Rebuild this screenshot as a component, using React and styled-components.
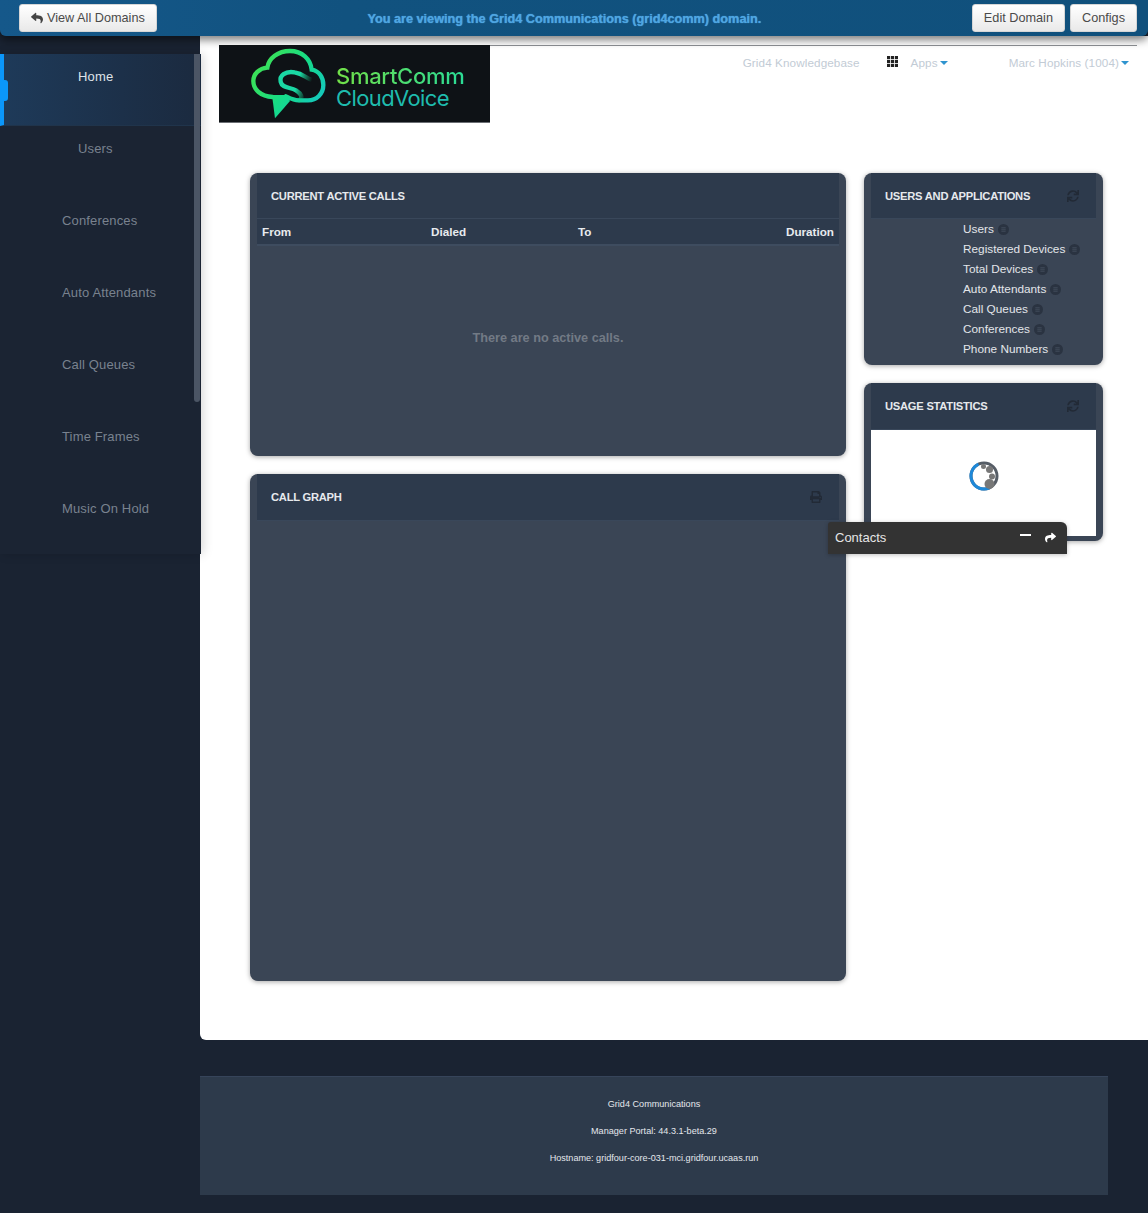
import React from "react";
import styled, { createGlobalStyle } from "styled-components";
import { FaReply, FaShare, FaSync, FaPrint, FaBars } from "react-icons/fa";

const GlobalStyle = createGlobalStyle`
	html, body {
		margin: 0;
		padding: 0;
		background: #1a2332;
		font-family: "Liberation Sans", Arial, sans-serif;
	}
	* {
		box-sizing: border-box;
	}
`;

const TopBar = styled.div`
	height: 36px;
	display: flex;
	align-items: center;
	justify-content: space-between;
	padding: 4px 11px 0 19px;
	background: linear-gradient(90deg, #15588a 0%, #11527f 30%, #10507c 100%);
	border-radius: 0 0 6px 6px;
	box-shadow: 0 4px 8px rgba(0, 0, 0, 0.5);
	position: relative;
	z-index: 3;
`;

const BarButton = styled.button`
	height: 28px;
	margin-bottom: 4px;
	padding: 0 11px;
	display: inline-flex;
	align-items: center;
	gap: 4px;
	font-family: inherit;
	font-size: 12.7px;
	color: #4a4a4a;
	background: linear-gradient(180deg, #ffffff 0%, #e9e9e9 100%);
	border: 1px solid #d6d6d6;
	border-radius: 3px;
`;

const BarActions = styled.div`
	display: flex;
	gap: 5px;
`;

const DomainNotice = styled.div`
	font-size: 12.7px;
	font-weight: bold;
	color: #4ea6e2;
	text-shadow: 0 0 1px #4ea6e2;
	margin-bottom: 2px;
`;

const Layout = styled.div`
	display: flex;
	align-items: flex-start;
`;

const Sidebar = styled.div`
	width: 200px;
	flex-shrink: 0;
	padding-top: 18px;
`;

const SideNav = styled.div`
	position: relative;
	width: 201px;
	height: 500px;
	background: #1b2433;
	box-shadow: 2px 0 10px rgba(0, 0, 0, 0.16);
	z-index: 2;
`;

const SideScroll = styled.div`
	position: absolute;
	right: 1px;
	top: 0;
	width: 6px;
	height: 348px;
	background: #4b5565;
	border-radius: 0 0 3px 3px;
`;

const SideItem = styled.div`
	position: relative;
	height: 72px;
	padding: 15px 0 0 ${(p) => p.$indent}px;
	font-size: 13px;
	line-height: 16px;
	letter-spacing: 0.15px;
	color: ${(p) => (p.$active ? "#dfe3e8" : "#79828f")};
	background: ${(p) =>
		p.$active ? "linear-gradient(90deg, #1e3a59 0%, #1c3049 60%, #1b2a3f 100%)" : "transparent"};
	border-left: ${(p) => (p.$active ? "4px solid #0b97fb" : "none")};
	${(p) => p.$active && `padding-left: ${p.$indent - 4}px; border-bottom: 1px solid #20344b;`}
`;

const ActiveNotch = styled.span`
	position: absolute;
	left: -4px;
	top: 26px;
	width: 8px;
	height: 21px;
	background: #0b97fb;
	border-radius: 0 3px 3px 0;
`;

const Main = styled.div`
	flex: 1;
	min-width: 0;
`;

const Sheet = styled.div`
	height: 1004px;
	background: #ffffff;
	border-radius: 0 0 0 6px;
	padding: 9px 11px 0 19px;
`;

const SheetHead = styled.div`
	display: flex;
	height: 78px;
`;

const LogoBox = styled.div`
	width: 271px;
	height: 78px;
	flex-shrink: 0;
	display: flex;
	align-items: flex-start;
	padding-left: 21px;
	background: #0e1216;
	border-bottom: 1px solid #6b6f74;
`;

const LogoText = styled.div`
	margin: 20px 0 0 -4px;
	font-family: Inter, "Liberation Sans", sans-serif;
`;

const LogoTop = styled.div`
	font-size: 22px;
	line-height: 22px;
	font-weight: 500;
	letter-spacing: -0.3px;
	background: linear-gradient(90deg, #72e048 0%, #2bdc96 100%);
	-webkit-background-clip: text;
	background-clip: text;
	color: transparent;
`;

const LogoBottom = styled.div`
	font-size: 22px;
	line-height: 22px;
	letter-spacing: -0.6px;
	color: #1fbcae;
`;

const TopNav = styled.div`
	flex: 1;
	height: 18px;
	border-top: 1px solid #8d9094;
	display: flex;
	justify-content: flex-end;
	align-items: flex-start;
	padding: 10px 8px 0 0;
	font-size: 11.7px;
	line-height: 14px;
	letter-spacing: 0.1px;
	color: #c2cbd5;
`;

const NavLink = styled.span`
	display: inline-flex;
	align-items: center;
	margin-left: ${(p) => p.$gap || 0}px;
	white-space: nowrap;
`;

const Caret = styled.i`
	width: 0;
	height: 0;
	margin-left: 2px;
	border-left: 4px solid transparent;
	border-right: 4px solid transparent;
	border-top: 4px solid #2f94cf;
`;

const Dashboard = styled.div`
	display: grid;
	grid-template-columns: 596px 239px;
	column-gap: 18px;
	margin: 50px 0 0 31px;
`;

const Column = styled.div`
	display: flex;
	flex-direction: column;
	gap: 18px;
`;

const Panel = styled.div`
	height: ${(p) => p.$height}px;
	padding: 0 7px;
	background: #3a4555;
	border-radius: 8px;
	box-shadow: 0 1px 5px rgba(0, 0, 0, 0.35);
`;

const PanelHead = styled.div`
	height: ${(p) => p.$height || 46}px;
	display: flex;
	align-items: center;
	justify-content: space-between;
	padding: 0 17px 0 14px;
	background: #2d3a4c;
	border-bottom: 1px solid #39475a;
	font-size: 11.2px;
	letter-spacing: -0.25px;
	font-weight: bold;
	color: #e6e9ed;
`;

const HeadIcon = styled.span`
	display: flex;
	color: #222a36;
	font-size: 12px;
`;

const CallsTable = styled.div`
	display: grid;
	grid-template-columns: 169px 147px 1fr auto;
	height: 27px;
	align-items: center;
	padding: 0 5px;
	background: #2d3a4c;
	border-bottom: 2px solid #3e4c5f;
	font-size: 11.7px;
	font-weight: bold;
	color: #e8ebee;
`;

const EmptyCalls = styled.div`
	padding-top: 85px;
	text-align: center;
	font-size: 12.7px;
	font-weight: bold;
	color: #727a85;
`;

const UsageList = styled.div`
	padding-left: 92px;
`;

const UsageRow = styled.div`
	height: 20px;
	display: flex;
	align-items: center;
	gap: 4px;
	font-size: 11.8px;
	color: #e3e6ea;
`;

const CountBadge = styled.span`
	width: 11px;
	height: 11px;
	border-radius: 50%;
	display: inline-flex;
	align-items: center;
	justify-content: center;
	background: #2a3341;
	color: #4b5767;
	font-size: 5px;
`;

const LoadingBody = styled.div`
	height: 106px;
	display: flex;
	justify-content: center;
	padding-top: 31px;
	background: #ffffff;
`;

const Footer = styled.div`
	margin-top: 36px;
	width: 908px;
	height: 119px;
	padding-top: 21px;
	background: #2d3a4b;
	border-top: 1px solid #36445a;
	text-align: center;
	color: #e4e7eb;
	font-size: 9.1px;
`;

const FooterLine = styled.div`
	height: 27px;
	line-height: 12px;
`;

const BottomGap = styled.div`
	height: 18px;
`;

const ContactsDock = styled.div`
	position: absolute;
	left: 828px;
	top: 522px;
	width: 239px;
	height: 32px;
	display: flex;
	align-items: center;
	justify-content: space-between;
	padding: 0 11px 2px 7px;
	background: #333333;
	border-radius: 3px 6px 0 0;
	box-shadow: 0 1px 4px rgba(0, 0, 0, 0.25);
	color: #e6e6e6;
	font-size: 13px;
	z-index: 4;
`;

const DockActions = styled.div`
	display: flex;
	align-items: center;
	gap: 14px;
	color: #ffffff;
`;

const DockMinimize = styled.span`
	width: 11px;
	height: 2px;
	margin-top: -5px;
	background: #ffffff;
`;

const CloudLogo = () => (
	<svg width="100" height="77" viewBox="0 0 300 231" fill="none">
		<defs>
			<linearGradient id="cloudGrad" gradientUnits="userSpaceOnUse" x1="40" y1="30" x2="250" y2="170">
				<stop offset="0" stopColor="#46e24a" />
				<stop offset="0.55" stopColor="#16dc86" />
				<stop offset="1" stopColor="#14c6c2" />
			</linearGradient>
			<linearGradient id="swirlGrad" gradientUnits="userSpaceOnUse" x1="218" y1="100" x2="180" y2="88">
				<stop offset="0" stopColor="#16c886" stopOpacity="0" />
				<stop offset="1" stopColor="#1ad8a4" />
			</linearGradient>
		</defs>
		<g strokeWidth="13" strokeLinecap="round">
			<path
				stroke="url(#cloudGrad)"
				d="M98 156 C62 154 40 134 40 108 C40 86 58 70 82 68 C86 40 114 18 150 18 C186 18 212 42 215 74 C238 78 250 98 250 120 C250 146 230 166 204 166 L176 166 C160 166 150 160 138 154"
			/>
			<path
				stroke="url(#swirlGrad)"
				d="M214 104 C198 100 190 86 164 82 C136 77 118 92 122 110 C126 130 150 126 168 136 C184 146 190 158 178 166"
			/>
		</g>
		<path d="M96 150 L105 220 L150 168 L140 150 Z" fill="url(#cloudGrad)" />
	</svg>
);

const LoadingSpinner = () => (
	<svg width="30" height="30" viewBox="0 0 30 30">
		<circle cx="15" cy="15" r="13" fill="none" stroke="#565d66" strokeWidth="3" />
		<path d="M15 2 A13 13 0 0 0 15 28" fill="none" stroke="#1e88d8" strokeWidth="3" transform="rotate(-25 15 15)" />
		<circle cx="14.5" cy="5.5" r="2.5" fill="#777" />
		<circle cx="20.5" cy="8.5" r="3.5" fill="#777" />
		<circle cx="23" cy="15.5" r="3" fill="#777" />
		<circle cx="20.5" cy="23" r="5" fill="#777" />
	</svg>
);

const GridGlyph = () => (
	<svg width="11" height="11" viewBox="0 0 11 11" fill="#222222">
		{[0, 4, 8].map((y) =>
			[0, 4, 8].map((x) => <rect key={`${x}-${y}`} x={x} y={y} width="3.2" height="3.2" />)
		)}
	</svg>
);

const sideItems = [
	{ label: "Home", indent: 78, active: true },
	{ label: "Users", indent: 78 },
	{ label: "Conferences", indent: 62 },
	{ label: "Auto Attendants", indent: 62 },
	{ label: "Call Queues", indent: 62 },
	{ label: "Time Frames", indent: 62 },
	{ label: "Music On Hold", indent: 62 },
];

const usageItems = [
	"Users",
	"Registered Devices",
	"Total Devices",
	"Auto Attendants",
	"Call Queues",
	"Conferences",
	"Phone Numbers",
];

const App = () => {
	return (
		<>
			<GlobalStyle />
			<TopBar>
				<BarButton>
					<FaReply size={12} color="#444" /> View All Domains
				</BarButton>
				<DomainNotice>You are viewing the Grid4 Communications (grid4comm) domain.</DomainNotice>
				<BarActions>
					<BarButton>Edit Domain</BarButton>
					<BarButton>Configs</BarButton>
				</BarActions>
			</TopBar>
			<Layout>
				<Sidebar>
					<SideNav>
						{sideItems.map((item) => (
							<SideItem key={item.label} $indent={item.indent} $active={item.active}>
								{item.active && <ActiveNotch />}
								{item.label}
							</SideItem>
						))}
						<SideScroll />
					</SideNav>
				</Sidebar>
				<Main>
					<Sheet>
						<SheetHead>
							<LogoBox>
								<CloudLogo />
								<LogoText>
									<LogoTop>SmartComm</LogoTop>
									<LogoBottom>CloudVoice</LogoBottom>
								</LogoText>
							</LogoBox>
							<TopNav>
								<NavLink>Grid4 Knowledgebase</NavLink>
								<NavLink $gap={27}>
									<GridGlyph />
								</NavLink>
								<NavLink $gap={13}>
									Apps
									<Caret />
								</NavLink>
								<NavLink $gap={61}>
									Marc Hopkins (1004)
									<Caret />
								</NavLink>
							</TopNav>
						</SheetHead>
						<Dashboard>
							<Column>
								<Panel $height={283}>
									<PanelHead>CURRENT ACTIVE CALLS</PanelHead>
									<CallsTable>
										<span>From</span>
										<span>Dialed</span>
										<span>To</span>
										<span>Duration</span>
									</CallsTable>
									<EmptyCalls>There are no active calls.</EmptyCalls>
								</Panel>
								<Panel $height={507}>
									<PanelHead $height={47}>
										CALL GRAPH
										<HeadIcon>
											<FaPrint />
										</HeadIcon>
									</PanelHead>
								</Panel>
							</Column>
							<Column>
								<Panel $height={192}>
									<PanelHead>
										USERS AND APPLICATIONS
										<HeadIcon>
											<FaSync />
										</HeadIcon>
									</PanelHead>
									<UsageList>
										{usageItems.map((label) => (
											<UsageRow key={label}>
												{label}
												<CountBadge>
													<FaBars />
												</CountBadge>
											</UsageRow>
										))}
									</UsageList>
								</Panel>
								<Panel $height={158}>
									<PanelHead $height={47}>
										USAGE STATISTICS
										<HeadIcon>
											<FaSync />
										</HeadIcon>
									</PanelHead>
									<LoadingBody>
										<LoadingSpinner />
									</LoadingBody>
								</Panel>
							</Column>
						</Dashboard>
					</Sheet>
					<Footer>
						<FooterLine>Grid4 Communications</FooterLine>
						<FooterLine>Manager Portal: 44.3.1-beta.29</FooterLine>
						<FooterLine>Hostname: gridfour-core-031-mci.gridfour.ucaas.run</FooterLine>
					</Footer>
					<BottomGap />
				</Main>
			</Layout>
			<ContactsDock>
				Contacts
				<DockActions>
					<DockMinimize />
					<FaShare size={11} />
				</DockActions>
			</ContactsDock>
		</>
	);
};

export default App;
